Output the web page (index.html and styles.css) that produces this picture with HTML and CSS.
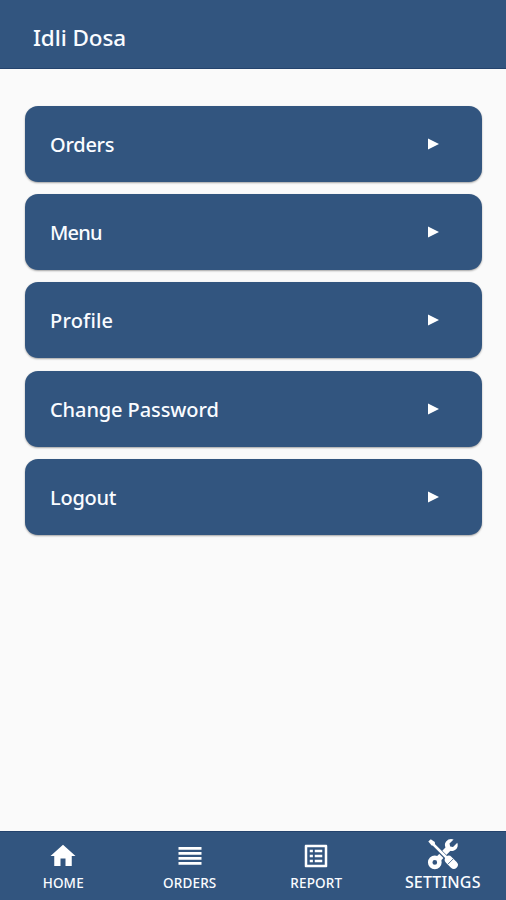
FILE: index.html
```html
<!DOCTYPE html>
<html lang="en">
<head>
<meta charset="utf-8">
<title>Idli Dosa</title>
<link rel="stylesheet" href="styles.css">
</head>
<body>
<header class="topbar"><h1 class="title">Idli Dosa</h1></header>
<main class="list">
  <a class="card"><span class="label orders">Orders</span><svg class="arrow" viewBox="0 0 11 12"><path d="M0 .5L11 6 0 11.500z"/></svg></a>
  <a class="card"><span class="label menu">Menu</span><svg class="arrow" viewBox="0 0 11 12"><path d="M0 .5L11 6 0 11.500z"/></svg></a>
  <a class="card"><span class="label profile">Profile</span><svg class="arrow" viewBox="0 0 11 12"><path d="M0 .5L11 6 0 11.500z"/></svg></a>
  <a class="card"><span class="label password">Change Password</span><svg class="arrow" viewBox="0 0 11 12"><path d="M0 .5L11 6 0 11.500z"/></svg></a>
  <a class="card"><span class="label logout">Logout</span><svg class="arrow" viewBox="0 0 11 12"><path d="M0 .5L11 6 0 11.500z"/></svg></a>
</main>
<nav class="tabs">
  <a class="tab">
    <svg class="icon" viewBox="0 0 24 24"><path d="M10 20v-6h4v6h5v-8h3L12 3 2 12h3v8z"/></svg>
    <span class="tab-label">HOME</span>
  </a>
  <a class="tab">
    <svg class="icon" viewBox="0 0 30 30"><path d="M3.500 6h23v2.800h-23zM3.500 11h23v2.800h-23zM3.500 16h23v2.800h-23zM3.500 21h23v2.800h-23z"/></svg>
    <span class="tab-label">ORDERS</span>
  </a>
  <a class="tab">
    <svg class="icon" viewBox="0 0 24 24"><path d="M19 5v14H5V5h14m1.100-2H3.900c-.5 0-.9.4-.9.900v16.200c0 .4.4.9.9.900h16.200c.4 0 .9-.5.9-.900V3.900c0-.5-.5-.9-.9-.900zM11 7h6v2h-6V7zm0 4h6v2h-6v-2zm0 4h6v2h-6v-2zM7 7h2.500v2H7zm0 4h2.500v2H7zm0 4h2.500v2H7z"/></svg>
    <span class="tab-label">REPORT</span>
  </a>
  <a class="tab active">
    <svg class="icon" viewBox="0 0 32 32">
      <path class="wrench" d="M8.500 24L23 9"/>
      <path d="M30.300 4.800l-4.300 4.200-2.800-.6-.7-2.800L26.600 1.500a7 7 0 0 0-7.500 2c-1.800 2-1.500 4.900.1 7.100 2 2.600 6.300 3.400 9.200 1.200 2.200-1.600 2.900-4.200 1.900-7z"/>
      <circle class="ring" cx="7.800" cy="24.400" r="4.600"/>
      <path class="gap" d="M6.500 7L21 21.500"/>
      <path class="shaft" d="M5 5l15 15"/>
      <path d="M1.300 3.500L3.800 1.200l4 2.700.3 3.300-3.500.3z"/>
      <path class="handle" d="M21.800 21.800l5 5"/>
      <path class="notch" d="M20.900 26.200l5.300-5.300"/>
    </svg>
    <span class="tab-label">SETTINGS</span>
  </a>
</nav>
</body>
</html>
```
FILE: styles.css
```css
* { box-sizing: border-box; }
body {
  margin: 0;
  height: 900px;
  display: flex;
  flex-direction: column;
  background: #fafafa;
  color: #fafcff;
  font-family: "Noto Sans", sans-serif;
  font-weight: 500;
}
.topbar {
  height: 69px;
  padding: 8px 33px 0;
  display: flex;
  align-items: center;
  background: #32557f;
  border-bottom: 1px solid #24436d;
}
.title { margin: 0; font-size: 22.500px; font-weight: 500; line-height: 32px; letter-spacing: -.1px; }
.list {
  flex: 1;
  padding: 37px 24px 0 25px;
  display: flex;
  flex-direction: column;
  gap: 12.200px;
}
.card {
  height: 76px;
  padding: 0 43px 0 25px;
  display: flex;
  align-items: center;
  justify-content: space-between;
  border-radius: 13px;
  background: #32557f;
  box-shadow: 0 1px 2px rgba(0, 0, 0, .35);
}
.label { font-size: 20px; line-height: 30px; padding-top: 2px; }
.orders { letter-spacing: -.25px; }
.menu { letter-spacing: -.8px; }
.profile { letter-spacing: .2px; }
.password { letter-spacing: -.1px; }
.logout { letter-spacing: -.25px; }
.arrow { width: 11px; height: 12px; fill: #fff; }
.tabs {
  height: 69px;
  display: grid;
  grid-template-columns: repeat(4, 1fr);
  background: #32557f;
  border-top: 1px solid #24436d;
}
.tab { display: flex; flex-direction: column; align-items: center; padding-top: 9px; }
.icon { width: 30px; height: 30px; fill: #fff; }
.tab-label { font-size: 13.500px; line-height: 20px; margin-top: 2px; letter-spacing: .15px; }
.active { padding-top: 6px; }
.active .icon { width: 32px; height: 32px; }
.active .tab-label { font-size: 16px; margin-top: 2px; }
.wrench { stroke: #fff; stroke-width: 6; }
.ring { fill: #32557f; stroke: #fff; stroke-width: 4.500; }
.gap { stroke: #32557f; stroke-width: 4.500; }
.shaft { stroke: #fff; stroke-width: 2.500; }
.handle { stroke: #fff; stroke-width: 8; stroke-linecap: round; }
.notch { stroke: #32557f; stroke-width: .8; }
```
